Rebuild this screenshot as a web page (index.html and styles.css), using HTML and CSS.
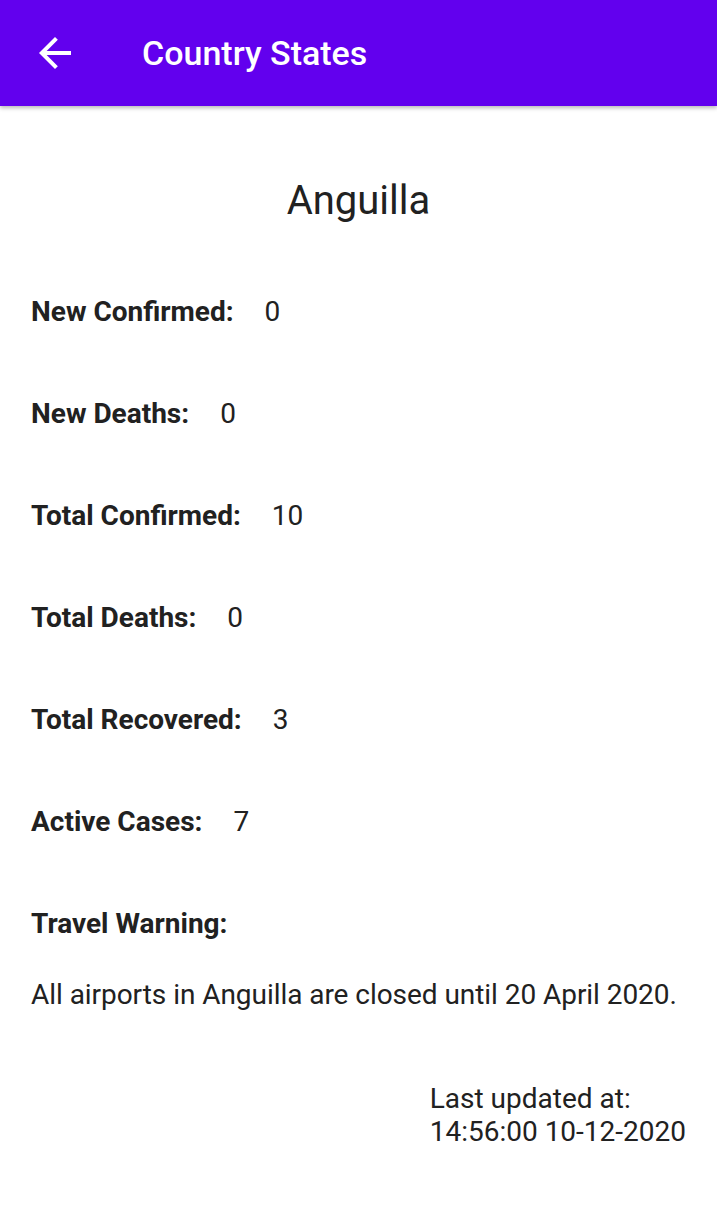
FILE: index.html
```html
<!DOCTYPE html>
<html>
<head>
<meta charset="utf-8">
<link rel="stylesheet" href="styles.css">
</head>
<body>
<header class="appbar">
  <svg class="back" viewBox="0 0 24 24" width="48" height="48"><path d="M20 11H7.83l5.59-5.59L12 4l-8 8 8 8 1.41-1.41L7.83 13H20v-2z" fill="#fff"/></svg>
  <h1 class="title">Country States</h1>
</header>
<main class="content">
  <h2 class="country">Anguilla</h2>
  <div class="row"><span class="label">New Confirmed:</span><span class="value">0</span></div>
  <div class="row"><span class="label">New Deaths:</span><span class="value">0</span></div>
  <div class="row"><span class="label">Total Confirmed:</span><span class="value">10</span></div>
  <div class="row"><span class="label">Total Deaths:</span><span class="value">0</span></div>
  <div class="row"><span class="label">Total Recovered:</span><span class="value">3</span></div>
  <div class="row"><span class="label">Active Cases:</span><span class="value">7</span></div>
  <div class="row"><span class="label">Travel Warning:</span></div>
  <p class="warning">All airports in Anguilla are closed until 20 April 2020.</p>
  <div class="updated">Last updated at:<br>14:56:00 10-12-2020</div>
</main>
</body>
</html>
```
FILE: styles.css
```css
html, body {
  margin: 0;
  padding: 0;
  background: #ffffff;
  font-family: Roboto, "Noto Sans", sans-serif;
  color: #212121;
}
.appbar {
  height: 106px;
  background: #6200ee;
  display: flex;
  align-items: center;
  padding-left: 31px;
  box-shadow: 0 2px 4px rgba(0, 0, 0, 0.28);
  position: relative;
}
.back {
  flex: none;
}
.title {
  margin: 0 0 0 63px;
  color: #ffffff;
  font-size: 34px;
  font-weight: 500;
  line-height: 40px;
}
.content {
  display: flex;
  flex-direction: column;
  padding: 0 31px;
}
.country {
  margin: 71px 0 0;
  text-align: center;
  font-size: 40px;
  font-weight: 400;
  line-height: 48px;
}
.row {
  display: flex;
  font-size: 28px;
  line-height: 34px;
  margin-top: 70px;
}
.row + .row {
  margin-top: 68px;
}
.label {
  font-weight: 700;
  margin-right: 31px;
}
.value {
  font-weight: 400;
}
.warning {
  margin: 37px 0 0;
  font-size: 28px;
  line-height: 34px;
  letter-spacing: -0.05px;
}
.updated {
  align-self: flex-end;
  margin-top: 70px;
  font-size: 28px;
  line-height: 33px;
}
```
